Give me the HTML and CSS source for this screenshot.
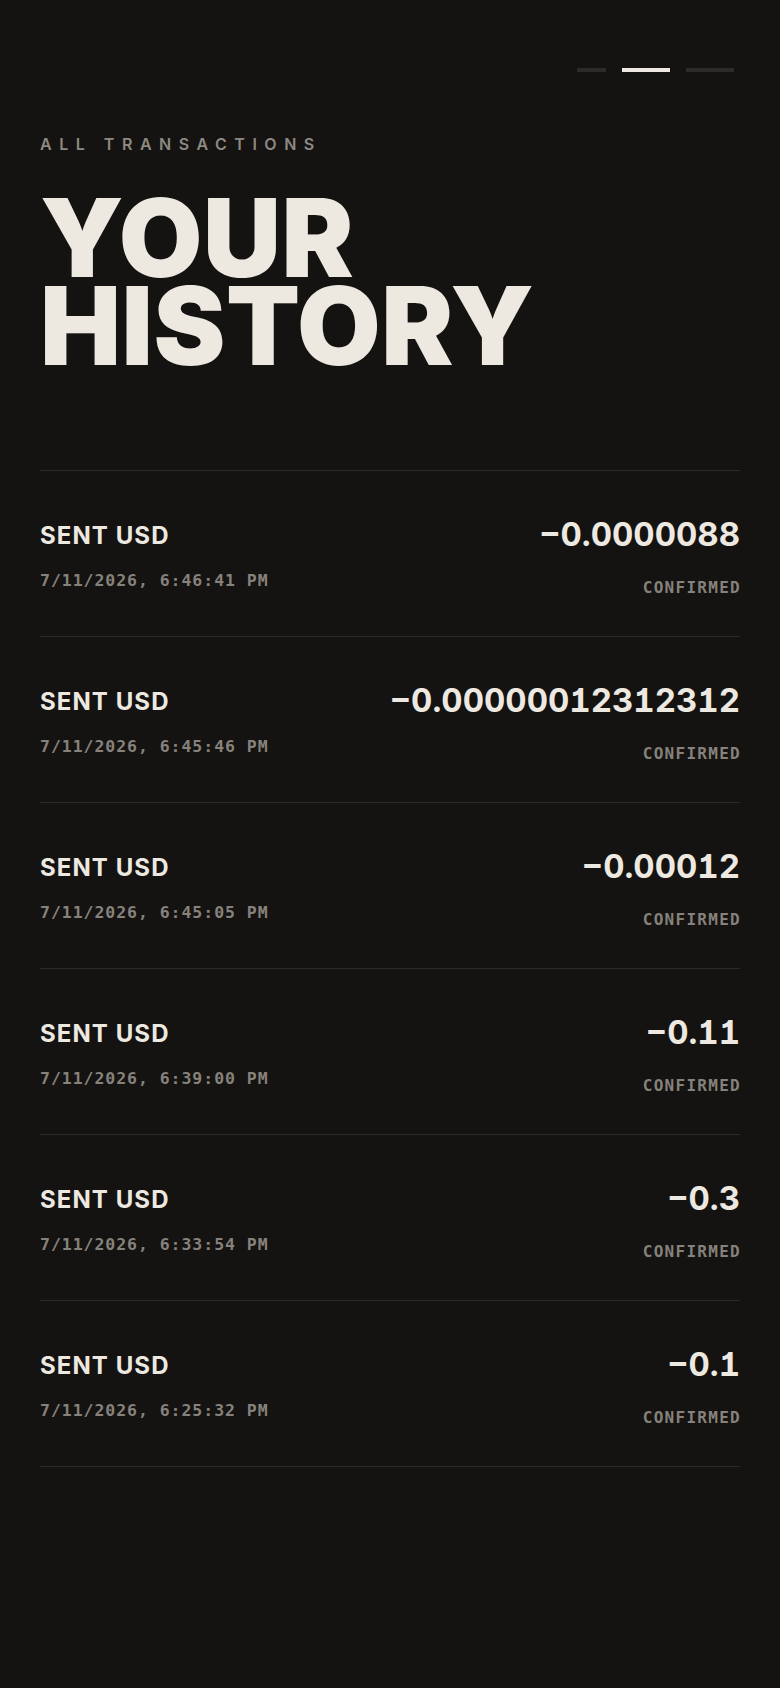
FILE: index.html
```html
<!DOCTYPE html>
<html lang="en">
<head>
<meta charset="UTF-8">
<meta name="viewport" content="width=device-width, initial-scale=1.0">
<title>Your History</title>
<link rel="stylesheet" href="styles.css">
</head>
<body>

<div class="page">
    <div class="steps">
        <span class="step"></span>
        <span class="step step-active"></span>
        <span class="step step-long"></span>
    </div>

    <p class="eyebrow">ALL TRANSACTIONS</p>
    <h1 class="title">YOUR<br>HISTORY</h1>

    <div class="history">
        <div class="tx">
            <div class="tx-left">
                <div class="tx-type">SENT USD</div>
                <div class="tx-date">7/11/2026, 6:46:41 PM</div>
            </div>
            <div class="tx-right">
                <div class="tx-amount">&minus;0.0000088</div>
                <div class="tx-status">CONFIRMED</div>
            </div>
        </div>
        <div class="tx">
            <div class="tx-left">
                <div class="tx-type">SENT USD</div>
                <div class="tx-date">7/11/2026, 6:45:46 PM</div>
            </div>
            <div class="tx-right">
                <div class="tx-amount">&minus;0.00000012312312</div>
                <div class="tx-status">CONFIRMED</div>
            </div>
        </div>
        <div class="tx">
            <div class="tx-left">
                <div class="tx-type">SENT USD</div>
                <div class="tx-date">7/11/2026, 6:45:05 PM</div>
            </div>
            <div class="tx-right">
                <div class="tx-amount">&minus;0.00012</div>
                <div class="tx-status">CONFIRMED</div>
            </div>
        </div>
        <div class="tx">
            <div class="tx-left">
                <div class="tx-type">SENT USD</div>
                <div class="tx-date">7/11/2026, 6:39:00 PM</div>
            </div>
            <div class="tx-right">
                <div class="tx-amount">&minus;0.11</div>
                <div class="tx-status">CONFIRMED</div>
            </div>
        </div>
        <div class="tx">
            <div class="tx-left">
                <div class="tx-type">SENT USD</div>
                <div class="tx-date">7/11/2026, 6:33:54 PM</div>
            </div>
            <div class="tx-right">
                <div class="tx-amount">&minus;0.3</div>
                <div class="tx-status">CONFIRMED</div>
            </div>
        </div>
        <div class="tx">
            <div class="tx-left">
                <div class="tx-type">SENT USD</div>
                <div class="tx-date">7/11/2026, 6:25:32 PM</div>
            </div>
            <div class="tx-right">
                <div class="tx-amount">&minus;0.1</div>
                <div class="tx-status">CONFIRMED</div>
            </div>
        </div>
    </div>
</div>

</body>
</html>
```

FILE: styles.css
```css
body {
    margin: 0;
    padding: 0;
    background-color: #141311;
    color: #ede9e1;
    font-family: Inter, "Noto Sans", sans-serif;
}
.page {
    padding: 0 40px 200px;
}
.steps {
    display: flex;
    justify-content: flex-end;
    gap: 16px;
    padding-top: 68px;
    padding-right: 6px;
}
.step {
    display: block;
    width: 29px;
    height: 4px;
    background-color: #2c2b28;
}
.step-active {
    width: 48px;
    background-color: #ede9e1;
}
.step-long {
    width: 48px;
}
.eyebrow {
    margin: 62px 0 0;
    font-size: 16px;
    line-height: 20px;
    font-weight: 600;
    letter-spacing: 0.47em;
    color: #8d8981;
}
.title {
    margin: 40px 0 0;
    font-size: 108px;
    line-height: 88px;
    font-weight: 900;
    letter-spacing: 0.005em;
    color: #ede9e1;
}
.history {
    margin-top: 100px;
    border-top: 1px solid #2b2a27;
}
.tx {
    display: flex;
    justify-content: space-between;
    align-items: center;
    padding: 43px 0 38px;
    border-bottom: 1px solid #2b2a27;
}
.tx-type {
    font-size: 24px;
    line-height: 29px;
    font-weight: 700;
    letter-spacing: 0.045em;
}
.tx-date {
    margin-top: 21px;
    font-family: "DejaVu Sans Mono", monospace;
    font-size: 16.5px;
    line-height: 20px;
    font-weight: bold;
    letter-spacing: 0.95px;
    color: #86827b;
}
.tx-right {
    text-align: right;
}
.tx-amount {
    font-size: 33px;
    line-height: 40px;
    font-weight: 700;
    font-feature-settings: "tnum", "cv01";
}
.tx-status {
    margin-top: 24px;
    margin-right: -1px;
    font-family: "DejaVu Sans Mono", monospace;
    font-size: 16px;
    line-height: 20px;
    font-weight: bold;
    letter-spacing: 0.08em;
    color: #86827b;
}
```
